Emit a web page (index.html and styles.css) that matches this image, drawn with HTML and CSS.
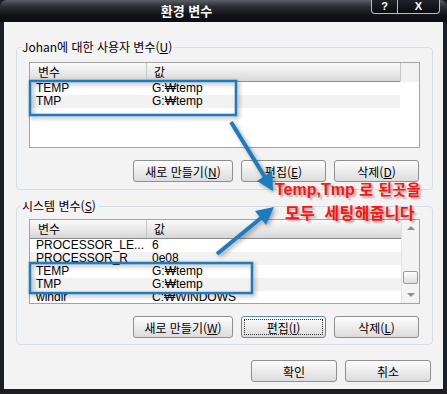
FILE: index.html
```html
<!DOCTYPE html>
<html lang="ko">
<head>
  <meta charset="UTF-8">
  <title>환경 변수</title>
  <link rel="stylesheet" href="styles.css">
</head>
<body>

<div class="window">
  <div class="titlebar">
    <div class="title">환경 변수</div>
    <div class="caption-btns">
      <div class="cap-btn help">?</div>
      <div class="cap-btn close">X</div>
    </div>
  </div>

  <div class="content">
    <!-- 사용자 변수 -->
    <fieldset class="group">
      <legend>Johan에 대한 사용자 변수(<u>U</u>)</legend>
      <div class="list list-user">
        <div class="list-head">
          <div class="col-name">변수</div>
          <div class="col-value">값</div>
          <div class="col-filler"></div>
        </div>
        <div class="row"><span class="cell-name">TEMP</span><span class="cell-value">G:₩temp</span></div>
        <div class="row alt"><span class="cell-name">TMP</span><span class="cell-value">G:₩temp</span></div>
      </div>
      <div class="btn-row">
        <button class="btn btn-wide">새로 만들기(<u>N</u>)</button>
        <button class="btn">편집(<u>E</u>)</button>
        <button class="btn">삭제(<u>D</u>)</button>
      </div>
    </fieldset>

    <!-- 시스템 변수 -->
    <fieldset class="group group-system">
      <legend>시스템 변수(<u>S</u>)</legend>
      <div class="list list-system">
        <div class="list-main">
          <div class="list-head">
            <div class="col-name">변수</div>
            <div class="col-value">값</div>
          </div>
          <div class="row"><span class="cell-name">PROCESSOR_LE...</span><span class="cell-value">6</span></div>
          <div class="row alt"><span class="cell-name">PROCESSOR_R</span><span class="cell-value">0e08</span></div>
          <div class="row"><span class="cell-name">TEMP</span><span class="cell-value">G:₩temp</span></div>
          <div class="row alt"><span class="cell-name">TMP</span><span class="cell-value">G:₩temp</span></div>
          <div class="row"><span class="cell-name">windir</span><span class="cell-value">C:₩WINDOWS</span></div>
        </div>
        <div class="scrollbar">
          <div class="sb-btn"><span class="tri-up"></span></div>
          <div class="sb-track">
            <div class="sb-thumb"></div>
          </div>
          <div class="sb-btn"><span class="tri-down"></span></div>
        </div>
      </div>
      <div class="btn-row">
        <button class="btn btn-wide">새로 만들기(<u>W</u>)</button>
        <button class="btn focused">편집(<u>I</u>)</button>
        <button class="btn">삭제(<u>L</u>)</button>
      </div>
    </fieldset>

    <div class="dialog-btns">
      <button class="btn">확인</button>
      <button class="btn">취소</button>
    </div>
  </div>

  <!-- 설명용 표시 -->
  <svg class="marks" width="447" height="394" viewBox="0 0 447 394">
    <rect x="30" y="81" width="206" height="34" fill="none" stroke="#1b7cc0" stroke-width="2.5"/>
    <rect x="30" y="263" width="222" height="30" fill="none" stroke="#1b7cc0" stroke-width="2.5"/>
    <line x1="231" y1="122" x2="266" y2="179" stroke="#1b7cc0" stroke-width="4"/>
    <polygon points="273,191 257,181 272,171" fill="#1b7cc0"/>
    <line x1="217" y1="254" x2="261" y2="218" stroke="#1b7cc0" stroke-width="4"/>
    <polygon points="274,207 266,225 255,211" fill="#1b7cc0"/>
  </svg>
  <div class="note note-1">Temp,Tmp <span class="ko">로 된곳을</span></div>
  <div class="note note-2"><span class="ko">모두&nbsp;&nbsp;세팅해줍니다</span></div>
</div>

</body>
</html>
```

FILE: styles.css
```css
* {
  box-sizing: border-box;
}

body {
  margin: 0;
  background: #1c1e26;
  font-family: 'Liberation Sans', 'Noto Sans CJK KR', sans-serif;
  font-size: 12px;
  color: #000;
}

.window {
  position: relative;
  width: 447px;
  height: 394px;
  display: flex;
  flex-direction: column;
  padding: 0 4px 5px;
  background: #1c1e26;
  border-radius: 7px 7px 0 0;
  overflow: hidden;
}

/* title bar */
.titlebar {
  height: 22px;
  margin: 0 -4px;
  display: flex;
  background: linear-gradient(#5b5e66 0, #2c2e35 30%, #111217 70%, #0c0d11 100%);
}

.title {
  flex: 1;
  text-align: center;
  color: #fff;
  font-family: 'Noto Sans CJK KR', sans-serif;
  font-weight: bold;
  font-size: 13px;
  line-height: 21px;
  padding-left: 2px;
}

.caption-btns {
  display: flex;
  margin-right: 7px;
  height: 14px;
}

.cap-btn {
  height: 14px;
  border: 1px solid #b8bcc4;
  border-top: none;
  color: #fff;
  font-weight: bold;
  font-size: 11px;
  line-height: 12px;
  text-align: center;
  background: linear-gradient(#202228, #0a0b0f);
}

.help {
  width: 27px;
  border-radius: 0 0 0 4px;
}

.close {
  width: 42px;
  border-left: none;
  border-radius: 0 0 4px 0;
}

/* dialog body */
.content {
  flex: 1;
  background: #f3f3f3;
  padding: 18px 10px 0 12px;
  display: flex;
  flex-direction: column;
}

.group {
  margin: 0;
  padding: 0 12px 7px;
  border: 1px solid #d5dee4;
  border-radius: 4px;
  min-width: 0;
}

.group legend {
  font-family: 'Noto Sans CJK KR', sans-serif;
  font-size: 12px;
  line-height: 14px;
  padding: 0 2px 0 1px;
  margin-left: -8px;
}

.group-system {
  margin-top: 9px;
  padding-bottom: 6px;
}

u {
  text-decoration: underline;
  text-underline-offset: 1px;
}

/* list views */
.list {
  margin-top: 8px;
  background: #fff;
  border: 1px solid #a3a3a3;
  overflow: hidden;
}

.list-user {
  height: 86px;
}

.list-system {
  margin-top: 6px;
  height: 85px;
  display: flex;
}

.list-main {
  flex: 1;
  overflow: hidden;
}

.list-head {
  display: flex;
  height: 19px;
  background: linear-gradient(#fafafa, #e6e6e6 60%, #d6d6d6);
  border-bottom: 1px solid #8c8c8c;
  font-family: 'Noto Sans CJK KR', sans-serif;
  line-height: 18px;
}

.col-name {
  width: 117px;
  padding-left: 8px;
  border-right: 1px solid #c6c6c6;
}

.col-value {
  flex: 1;
  padding-left: 7px;
}

.col-filler {
  width: 19px;
  background: #f1f1f1;
  border-left: 1px solid #c6c6c6;
  border-bottom: 1px solid #f1f1f1;
}

.list-user .list-head {
  border-bottom: none;
}

.list-user .col-name,
.list-user .col-value {
  border-bottom: 1px solid #8c8c8c;
}

.row {
  display: flex;
  height: 13px;
  line-height: 13px;
  white-space: nowrap;
  overflow: hidden;
}

.row.alt {
  background: #f2f2f2;
}

.list-user .row {
  margin-right: 19px;
}

.cell-name {
  width: 117px;
  padding-left: 6px;
  overflow: hidden;
}

.cell-value {
  padding-left: 5px;
}

/* scrollbar */
.scrollbar {
  width: 18px;
  display: flex;
  flex-direction: column;
  background: #f3f3f3;
  border-left: 1px solid #e2e2e2;
}

.sb-btn {
  height: 16px;
  display: flex;
  align-items: center;
  justify-content: center;
}

.tri-up,
.tri-down {
  width: 0;
  height: 0;
  border-left: 4px solid transparent;
  border-right: 4px solid transparent;
}

.tri-up {
  border-bottom: 4px solid #8e8e8e;
}

.tri-down {
  border-top: 4px solid #8e8e8e;
}

.sb-track {
  flex: 1;
  display: flex;
  flex-direction: column;
  justify-content: flex-end;
  padding: 0 1px 3px;
}

.sb-thumb {
  height: 13px;
  border: 1px solid #9a9a9a;
  border-radius: 2px;
  background: linear-gradient(#fdfdfd, #dedede);
}

/* buttons */
.btn-row {
  display: flex;
  justify-content: flex-end;
  gap: 8px;
  margin-top: 12px;
  padding-right: 1px;
}

.btn {
  width: 85px;
  height: 22px;
  padding: 0;
  font-family: 'Noto Sans CJK KR', sans-serif;
  font-size: 12px;
  color: #000;
  background: linear-gradient(#fdfdfd, #ececec 50%, #dcdcdc);
  border: 1px solid #8f8f8f;
  border-radius: 3px;
}

.btn-wide {
  width: 100px;
}

.btn.focused {
  border-color: #5b86b8;
  outline: 1px dotted #333;
  outline-offset: -4px;
}

.dialog-btns {
  display: flex;
  justify-content: flex-end;
  gap: 8px;
  margin-top: 15px;
  margin-right: 2px;
}

.dialog-btns .btn {
  width: 86px;
}

/* annotations drawn over the dialog */
.marks {
  position: absolute;
  left: 0;
  top: 0;
  filter: drop-shadow(2px 2px 2px rgba(0, 0, 0, 0.35));
  pointer-events: none;
}

.note {
  position: absolute;
  color: #ff1212;
  font-weight: bold;
  white-space: nowrap;
  line-height: 15px;
  text-shadow: 2px 2px 2px rgba(0, 0, 0, 0.3);
}

.note .ko {
  font-family: 'Noto Sans CJK KR', sans-serif;
}

.note-1 {
  left: 275px;
  top: 181px;
  font-size: 16px;
}

.note-1 .ko {
  font-size: 15px;
  letter-spacing: 0.5px;
}

.note-2 {
  left: 285px;
  top: 205px;
}

.note-2 .ko {
  font-size: 16px;
  letter-spacing: 0.3px;
}
```
